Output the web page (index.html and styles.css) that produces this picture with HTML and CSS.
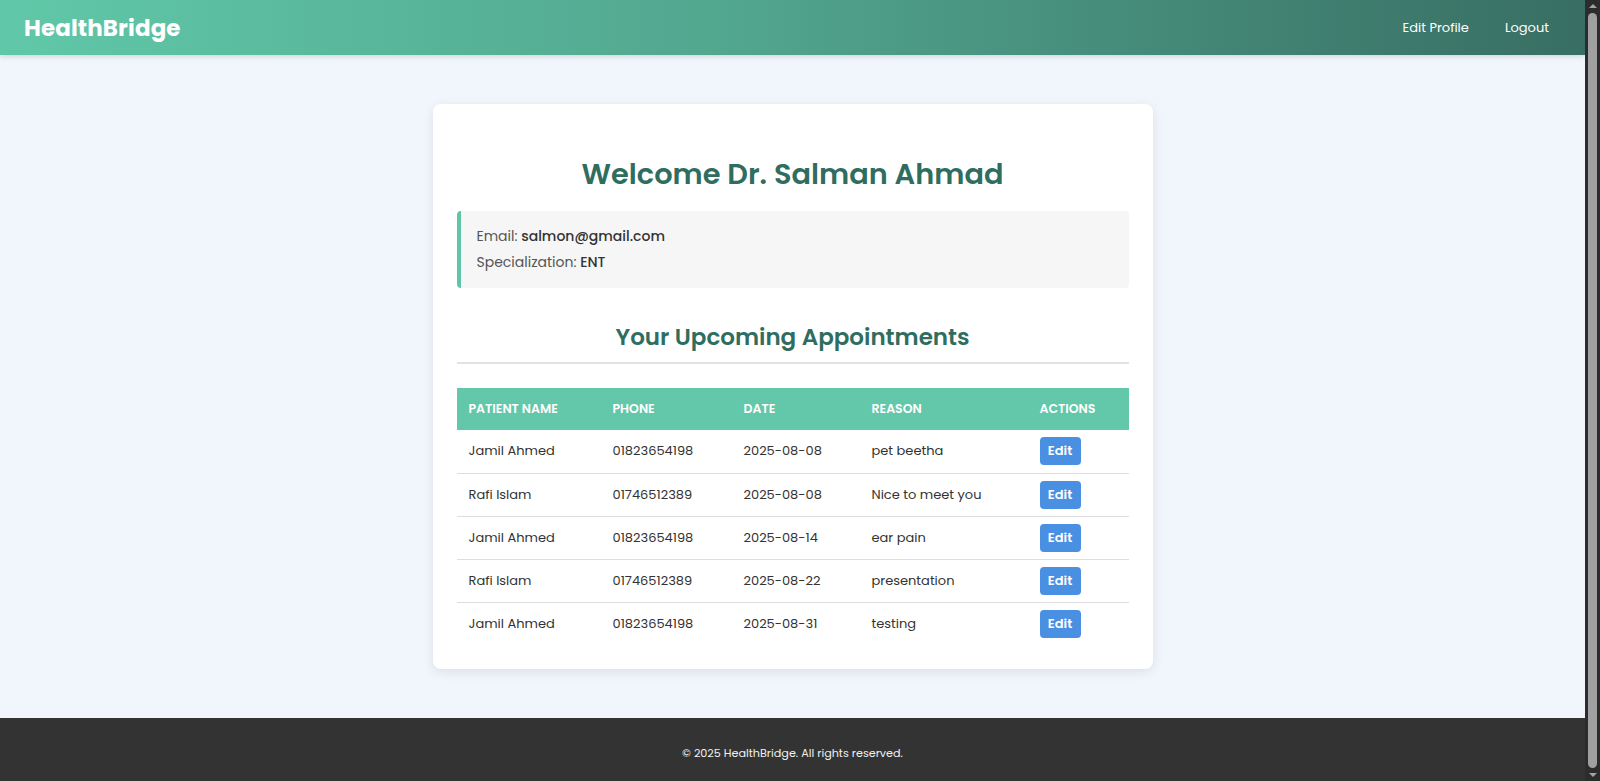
FILE: index.html
```html
<!DOCTYPE html>
<html lang="en">
<head>
<meta charset="utf-8">
<title>HealthBridge - Doctor Dashboard</title>
<link rel="stylesheet" href="styles.css">
</head>
<body>
<header class="topbar">
  <div class="logo">HealthBridge</div>
  <nav class="nav">
    <a href="#" class="nav-link">Edit Profile</a>
    <a href="#" class="nav-link">Logout</a>
  </nav>
</header>
<main class="main">
  <section class="card">
    <h1 class="welcome">Welcome Dr. Salman Ahmad</h1>
    <div class="info">
      <p class="info-line">Email: <strong>salmon@gmail.com</strong></p>
      <p class="info-line">Specialization: <strong>ENT</strong></p>
    </div>
    <h2 class="section-title">Your Upcoming Appointments</h2>
    <table class="appts">
      <colgroup>
        <col class="c1"><col class="c2"><col class="c3"><col class="c4"><col class="c5">
      </colgroup>
      <thead>
        <tr><th>Patient Name</th><th>Phone</th><th>Date</th><th>Reason</th><th>Actions</th></tr>
      </thead>
      <tbody>
        <tr><td>Jamil Ahmed</td><td>01823654198</td><td>2025-08-08</td><td>pet beetha</td><td><button class="edit-btn">Edit</button></td></tr>
        <tr><td>Rafi Islam</td><td>01746512389</td><td>2025-08-08</td><td>Nice to meet you</td><td><button class="edit-btn">Edit</button></td></tr>
        <tr><td>Jamil Ahmed</td><td>01823654198</td><td>2025-08-14</td><td>ear pain</td><td><button class="edit-btn">Edit</button></td></tr>
        <tr><td>Rafi Islam</td><td>01746512389</td><td>2025-08-22</td><td>presentation</td><td><button class="edit-btn">Edit</button></td></tr>
        <tr><td>Jamil Ahmed</td><td>01823654198</td><td>2025-08-31</td><td>testing</td><td><button class="edit-btn">Edit</button></td></tr>
      </tbody>
    </table>
  </section>
</main>
<footer class="footer">
  <p class="footer-text">&copy; 2025 HealthBridge. All rights reserved.</p>
</footer>
<div class="fake-scrollbar" aria-hidden="true">
  <span class="sb-arrow sb-up"></span>
  <span class="sb-thumb"></span>
  <span class="sb-arrow sb-down"></span>
</div>
</body>
</html>
```
FILE: styles.css
```css
* { box-sizing: border-box; }

body {
  margin: 0 15px 0 0;
  font-family: Poppins, Inter, "Noto Sans", sans-serif;
  background: #f0f6fc;
  color: #333;
}

.topbar {
  height: 55px;
  display: flex;
  align-items: center;
  justify-content: space-between;
  padding: 0 24px;
  background: linear-gradient(90deg, #60c8a8 0%, #52a78f 45%, #386e63 100%);
  box-shadow: 0 2px 5px rgba(0,0,0,0.12);
}

.logo {
  color: #fff;
  font-size: 23px;
  font-weight: 700;
  letter-spacing: 0.1px;
}

.nav { display: flex; gap: 12px; }

.nav-link {
  color: #fff;
  text-decoration: none;
  font-size: 13px;
  padding: 8px 12px;
}

.main { padding: 49px 0 49px; }

.card {
  width: 720px;
  margin: 0 auto;
  background: #fff;
  border-radius: 8px;
  padding: 24px;
  box-shadow: 0 3px 12px rgba(0,0,0,0.09);
}

.welcome {
  margin: 26px 0 17px;
  text-align: center;
  color: #2f6d61;
  font-size: 28.8px;
  font-weight: 600;
  line-height: 40px;
}

.info {
  background: #f6f6f6;
  border-left: 4px solid #5fc5a6;
  border-radius: 4px;
  padding: 13px 16px;
  color: #555;
}

.info-line {
  margin: 0;
  font-size: 14px;
  line-height: 25.5px;
}

.info-line strong { color: #333; font-weight: 500; }

.section-title {
  margin: 32px 0 24px;
  padding-bottom: 8px;
  border-bottom: 2px solid #e2e2e2;
  text-align: center;
  color: #2f6d61;
  font-size: 23px;
  font-weight: 600;
  line-height: 34px;
}

.appts {
  width: 100%;
  border-collapse: collapse;
  table-layout: fixed;
}

.c1 { width: 144px; }
.c2 { width: 131px; }
.c3 { width: 128px; }
.c4 { width: 168px; }
.c5 { width: 101px; }

.appts th {
  background: #62c8a9;
  color: #fff;
  text-align: left;
  text-transform: uppercase;
  font-size: 12.5px;
  font-weight: 600;
  height: 42px;
  padding: 0 12px;
}

.appts td {
  height: 43px;
  padding: 0 12px;
  font-size: 13px;
  border-bottom: 1px solid #dedede;
  vertical-align: middle;
}

.appts tbody tr:last-child td { border-bottom: none; }

.edit-btn {
  font-family: inherit;
  background: #4a90e2;
  color: #fff;
  border: none;
  border-radius: 4px;
  font-size: 13px;
  font-weight: 600;
  width: 41px;
  height: 28px;
  padding: 0;
  cursor: pointer;
}

.footer {
  background: #333;
  color: #f0f0f0;
  text-align: center;
  padding: 25px 0 24px;
}

.footer-text {
  margin: 0;
  font-size: 11.2px;
  line-height: 20px;
}

.fake-scrollbar {
  position: fixed;
  top: 0;
  right: 0;
  width: 15px;
  height: 100vh;
  background: #2c2c2c;
  display: flex;
  flex-direction: column;
  align-items: center;
  padding: 4px 0;
}

.sb-arrow {
  width: 0;
  height: 0;
  border-left: 4px solid transparent;
  border-right: 4px solid transparent;
}

.sb-up { border-bottom: 4px solid #a3a3a3; margin-bottom: 5px; }
.sb-down { border-top: 4px solid #a3a3a3; margin-top: 5px; }

.sb-thumb {
  flex: 1;
  width: 9px;
  border-radius: 5px;
  background: #a0a0a0;
}
```
